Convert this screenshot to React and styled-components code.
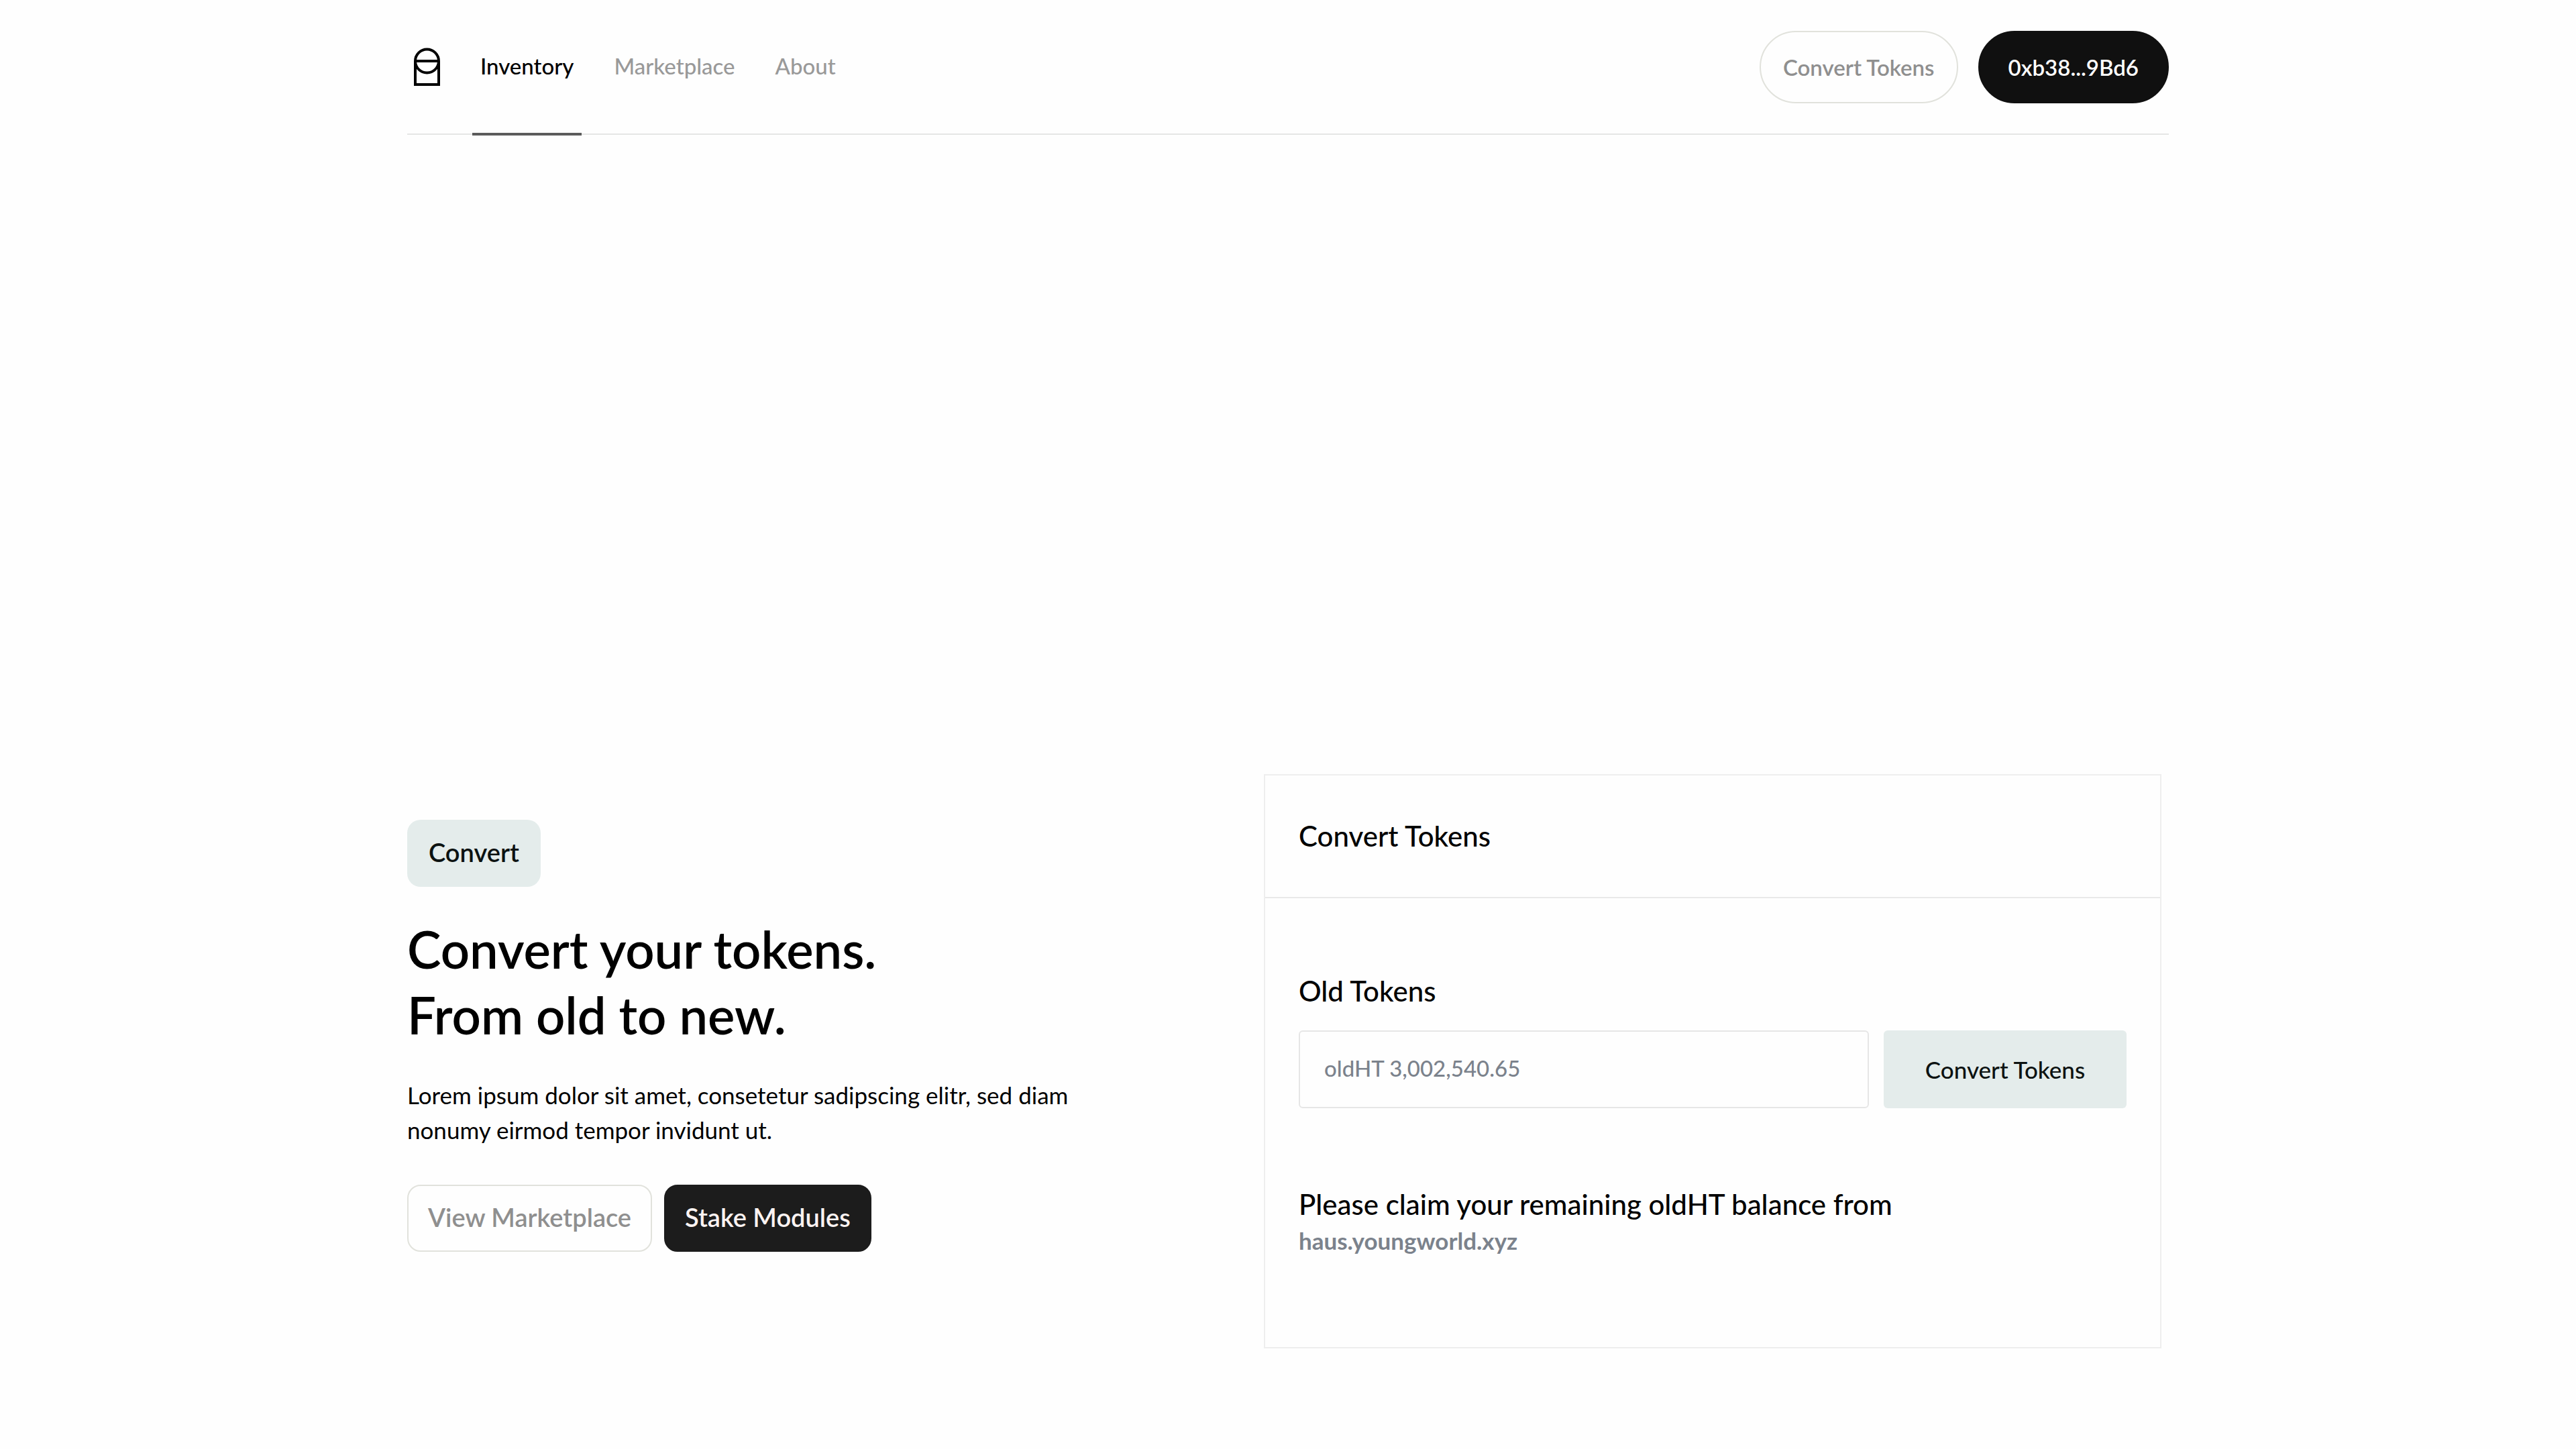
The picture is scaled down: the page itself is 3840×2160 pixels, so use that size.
import React from "react";
import styled, { createGlobalStyle, css } from "styled-components";

const GlobalStyle = createGlobalStyle`
  *, *::before, *::after { box-sizing: border-box; }
  body {
    margin: 0;
    background: #fefefe;
    color: #000;
    font-family: Lato, "Noto Sans", sans-serif;
  }
  h1, h2, p { margin: 0; }
  button, input { font: inherit; margin: 0; }
  a { color: inherit; text-decoration: none; }
`;

const Page = styled.div`
  max-width: 2626px;
  min-height: 100vh;
  margin: 0 auto;
`;

const Header = styled.header`
  display: flex;
  justify-content: space-between;
  border-bottom: 2px solid #e5e6e5;
`;

const HeaderLeft = styled.div`
  display: flex;
  align-items: stretch;
  gap: 48px;
  padding-left: 10px;
`;

const LogoLink = styled.a`
  display: flex;
  align-items: center;
`;

const Nav = styled.nav`
  display: flex;
  gap: 36px;
`;

const NavLink = styled.a`
  display: flex;
  align-items: center;
  margin-bottom: -3px;
  padding: 0 12px 2px;
  border-bottom: 4px solid ${(p) => (p.$active ? "#5b5b5b" : "transparent")};
  color: ${(p) => (p.$active ? "#000" : "#999")};
  font-size: 33px;
  font-weight: 500;
`;

const HeaderActions = styled.div`
  display: flex;
  gap: 30px;
  padding: 46px 0 45px;
`;

const Pill = styled.button`
  height: 108px;
  padding: 0 ${(p) => (p.$dark ? 43 : 33)}px;
  border: 2px solid ${(p) => (p.$dark ? "#101010" : "#e1e2dc")};
  border-radius: 54px;
  background: ${(p) => (p.$dark ? "#101010" : "transparent")};
  color: ${(p) => (p.$dark ? "#fff" : "#8f8f8f")};
  font-size: 33px;
  font-weight: 600;
`;

const Main = styled.main`
  display: flex;
  align-items: flex-start;
  justify-content: space-between;
  padding: 953px 11px 150px 0;
`;

const Intro = styled.section`
  padding-top: 68px;
`;

const Badge = styled.span`
  display: inline-flex;
  align-items: center;
  height: 100px;
  padding: 0 32px 4px;
  border-radius: 20px;
  background: #e4eceb;
  color: #0c1211;
  font-size: 38px;
  font-weight: 600;
`;

const Title = styled.h1`
  margin-top: 44px;
  font-size: 76px;
  line-height: 98px;
  font-weight: 600;
`;

const Lead = styled.p`
  max-width: 1040px;
  margin-top: 44px;
  font-size: 35px;
  line-height: 52px;
  font-weight: 400;
`;

const Actions = styled.div`
  display: flex;
  gap: 18px;
  margin-top: 56px;
`;

const Button = styled.button`
  height: 100px;
  padding: 0 29px 4px;
  border: 2px solid #e1e2dc;
  border-radius: 20px;
  background: transparent;
  color: #8f8f8f;
  font-size: 38px;
  font-weight: 600;
  ${(p) =>
    p.$dark &&
    css`
      border-color: #1c1c1c;
      background: #1c1c1c;
      color: #fbf3f2;
    `}
`;

const Card = styled.section`
  flex: 0 1 1338px;
  border: 2px solid #eee;
`;

const CardHeader = styled.header`
  padding: 65px 50px 66px;
  border-bottom: 2px solid #e9e9e9;
`;

const CardBody = styled.div`
  display: flex;
  flex-direction: column;
  padding: 113px 50px 134px;
`;

const cardText = css`
  font-size: 42px;
  line-height: 50px;
  font-weight: 500;
`;

const CardTitle = styled.h2`
  ${cardText}
`;

const Label = styled.label`
  ${cardText}
`;

const Note = styled.p`
  ${cardText}
  margin-top: 118px;
`;

const Form = styled.form`
  display: flex;
  gap: 22px;
  margin-top: 34px;
`;

const TextInput = styled.input`
  flex: 1;
  min-width: 0;
  height: 116px;
  padding: 0 36px 4px;
  border: 2px solid #e6e6e6;
  border-radius: 6px;
  background: transparent;
  color: #000;
  font-size: 33px;
  font-weight: 500;
  &::placeholder {
    color: #7b828c;
    opacity: 1;
  }
`;

const SubmitButton = styled.button`
  width: 362px;
  height: 116px;
  padding: 0;
  border: 0;
  border-radius: 6px;
  background: #e4eceb;
  color: #0c1211;
  font-size: 35px;
  font-weight: 500;
`;

const SiteLink = styled.a`
  align-self: flex-start;
  margin-top: 4px;
  color: #7b828c;
  font-size: 35px;
  line-height: 50px;
  font-weight: 700;
`;

function Logo() {
  return (
    <svg width="39" height="58" viewBox="0 0 39 58" fill="none" stroke="#000" strokeWidth="4" aria-hidden="true">
      <circle cx="19.5" cy="20" r="17.5" />
      <path d="M2 20V55H37V20" />
      <path d="M2 20H37" />
    </svg>
  );
}

const links = [
  { name: "Inventory", active: true },
  { name: "Marketplace" },
  { name: "About" },
];

export default function App() {
  return (
    <>
      <GlobalStyle />
      <Page>
        <Header>
          <HeaderLeft>
            <LogoLink href="#" aria-label="Home">
              <Logo />
            </LogoLink>
            <Nav>
              {links.map((l) => (
                <NavLink key={l.name} href="#" $active={l.active}>
                  {l.name}
                </NavLink>
              ))}
            </Nav>
          </HeaderLeft>
          <HeaderActions>
            <Pill type="button">Convert Tokens</Pill>
            <Pill type="button" $dark>0xb38...9Bd6</Pill>
          </HeaderActions>
        </Header>
        <Main>
          <Intro>
            <Badge>Convert</Badge>
            <Title>
              Convert your tokens.
              <br />
              From old to new.
            </Title>
            <Lead>
              Lorem ipsum dolor sit amet, consetetur sadipscing elitr, sed diam nonumy eirmod tempor invidunt ut.
            </Lead>
            <Actions>
              <Button type="button">View Marketplace</Button>
              <Button type="button" $dark>Stake Modules</Button>
            </Actions>
          </Intro>
          <Card>
            <CardHeader>
              <CardTitle>Convert Tokens</CardTitle>
            </CardHeader>
            <CardBody>
              <Label htmlFor="old-tokens">Old Tokens</Label>
              <Form onSubmit={(e) => e.preventDefault()}>
                <TextInput id="old-tokens" type="text" placeholder="oldHT 3,002,540.65" />
                <SubmitButton type="submit">Convert Tokens</SubmitButton>
              </Form>
              <Note>Please claim your remaining oldHT balance from</Note>
              <SiteLink href="#">haus.youngworld.xyz</SiteLink>
            </CardBody>
          </Card>
        </Main>
      </Page>
    </>
  );
}
